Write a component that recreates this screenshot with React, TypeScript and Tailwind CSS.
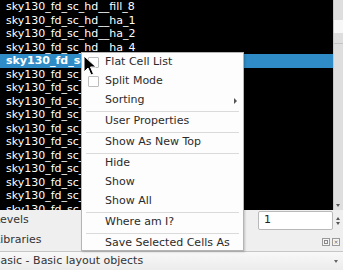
const cells = [
  "sky130_fd_sc_hd__fill_8",
  "sky130_fd_sc_hd__ha_1",
  "sky130_fd_sc_hd__ha_2",
  "sky130_fd_sc_hd__ha_4",
  "sky130_fd_sc_hd__inv_1",
  "sky130_fd_sc_hd__inv_12",
  "sky130_fd_sc_hd__inv_16",
  "sky130_fd_sc_hd__inv_2",
  "sky130_fd_sc_hd__inv_4",
  "sky130_fd_sc_hd__inv_6",
  "sky130_fd_sc_hd__inv_8",
  "sky130_fd_sc_hd__lpflow_1",
  "sky130_fd_sc_hd__lpflow_2",
  "sky130_fd_sc_hd__maj3_1",
  "sky130_fd_sc_hd__maj3_2",
  "sky130_fd_sc_hd__maj3_4",
]

function Check() {
  return <span className="absolute left-[6px] top-[4px] w-[11px] h-[11px] border border-[#bdbdbd] bg-white rounded-[1px]" />
}

function Item({ label, check, sub }: { label: string; check?: boolean; sub?: boolean }) {
  return (
    <div className="relative h-[19px] flex items-center pl-[23px] text-[#2b2b2b]">
      {check && <Check />}
      <span>{label}</span>
      {sub && <span className="absolute right-[6px] top-[7px] w-0 h-0 border-y-[3px] border-y-transparent border-l-[3px] border-l-[#555]" />}
    </div>
  )
}

function Sep() {
  return (
    <div className="h-[2px] flex items-center px-[4px]">
      <div className="h-px w-full bg-[#dadada]" />
    </div>
  )
}

export default function App() {
  return (
    <div className="relative w-[343px] h-[270px] overflow-hidden bg-[#efefef] font-['DejaVu_Sans',sans-serif] text-[11px]">
      <div className="flex h-[210px]">
        <div className="w-[333px] bg-black text-white text-[11px] overflow-hidden">
          {cells.map((c, i) => (
            <div
              key={c}
              className={i === 4 ? "h-[13.5px] leading-[13.5px] pl-[6px] bg-[#308cc6] font-bold" : "h-[13.5px] leading-[13.5px] pl-[6px]"}
            >
              {c}
            </div>
          ))}
        </div>
        <div className="relative w-[10px] bg-[#dedede] border-l border-[#c8c8c8]">
          <div className="mt-[20px] h-[13px] bg-[#f7f7f7]" />
          <div className="mt-[10px] h-px bg-[#c4c4c4]" />
          <span className="absolute left-[2px] bottom-[3px] w-0 h-0 border-x-[2.5px] border-x-transparent border-t-[3px] border-t-[#555]" />
        </div>
      </div>

      <div className="flex h-[41px] text-[#333]">
        <div className="w-[258px] flex flex-col">
          <div className="h-[20px] flex items-center -ml-[6px]">Levels</div>
          <div className="h-[20px] flex items-center -ml-[6px]">Libraries</div>
        </div>
        <div className="flex-1 flex flex-col">
          <div className="flex h-[21px] pt-px">
            <div className="w-[75px] h-[19px] bg-white border border-[#b9b9b9] rounded-[2px] flex items-center pl-[5px] text-[#222]">1</div>
            <div className="flex-1 flex flex-col items-center justify-center gap-[2px]">
              <span className="w-0 h-0 border-x-[2.5px] border-x-transparent border-b-[3px] border-b-[#555]" />
              <span className="w-0 h-0 border-x-[2.5px] border-x-transparent border-t-[3px] border-t-[#555]" />
            </div>
          </div>
          <div className="flex justify-end items-center gap-[2px] h-[19px] pr-[3px] pt-[2px]">
            <span className="w-[8px] h-[8px] border border-[#999] bg-[#f4f4f4] flex items-center justify-center">
              <span className="w-[4px] h-[4px] border border-[#888]" />
            </span>
            <span className="w-[8px] h-[8px] border border-[#999] bg-[#f4f4f4] flex items-center justify-center text-[6px] leading-none text-[#666]">×</span>
          </div>
        </div>
      </div>

      <div className="h-[19px] border-t border-[#c6c6c6] bg-gradient-to-b from-[#f8f8f8] to-[#ececec] flex items-center text-[#333]">
        <span className="-ml-[7px] flex-1">Basic - Basic layout objects</span>
        <span className="mr-[5px] w-0 h-0 border-x-[2.5px] border-x-transparent border-t-[3px] border-t-[#666]" />
      </div>

      <div className="absolute left-[81px] top-[52px] w-[163px] h-[199px] bg-[#fdfdfd] border border-[#b4b4b4] shadow-[1px_1px_2px_rgba(0,0,0,0.2)]">
        <Item label="Flat Cell List" check />
        <Item label="Split Mode" check />
        <Item label="Sorting" sub />
        <Sep />
        <Item label="User Properties" />
        <Sep />
        <Item label="Show As New Top" />
        <Sep />
        <Item label="Hide" />
        <Item label="Show" />
        <Item label="Show All" />
        <Sep />
        <Item label="Where am I?" />
        <Sep />
        <Item label="Save Selected Cells As" />
      </div>

      <svg className="absolute left-[83px] top-[55px]" width="14" height="22" viewBox="0 0 14 22">
        <path d="M1 1 L1 17 L5 13 L8 20 L10.5 19 L7.5 12 L13 12 Z" fill="#000" stroke="#fff" strokeWidth="1" strokeLinejoin="round" />
      </svg>
    </div>
  )
}
